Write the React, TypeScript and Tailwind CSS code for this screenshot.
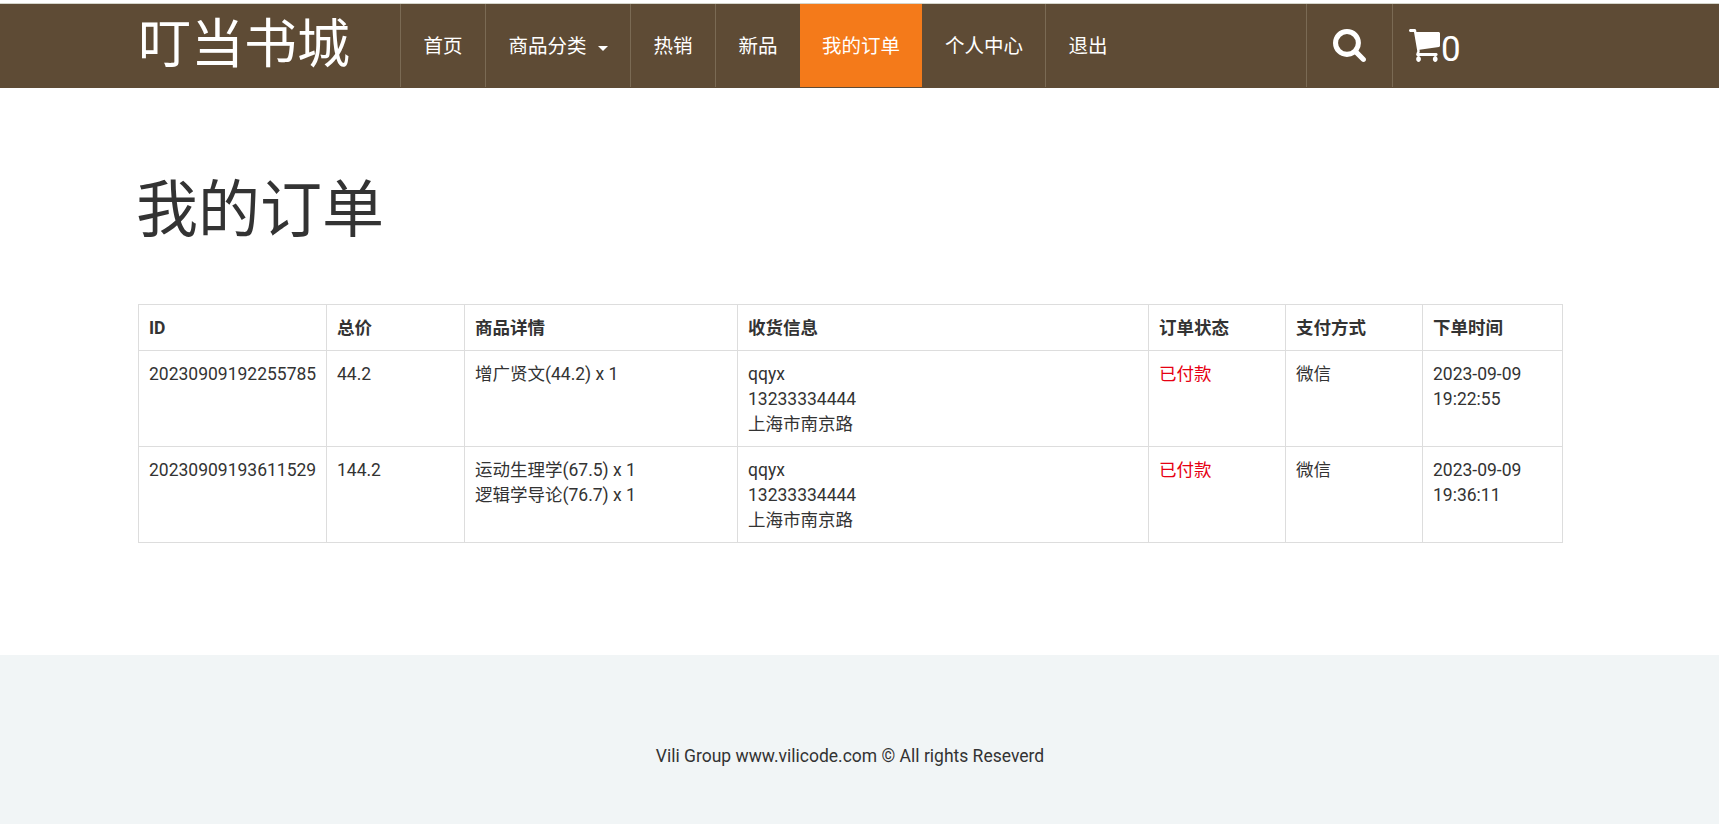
import React from "react";

const cjk = "font-['Roboto','Noto_Sans_CJK_SC',sans-serif]";

const navItems = ["首页", "商品分类", "热销", "新品", "我的订单", "个人中心", "退出"];

const orders = [
  {
    id: "20230909192255785",
    total: "44.2",
    items: ["增广贤文(44.2) x 1"],
    date: "2023-09-09",
    time: "19:22:55",
  },
  {
    id: "20230909193611529",
    total: "144.2",
    items: ["运动生理学(67.5) x 1", "逻辑学导论(76.7) x 1"],
    date: "2023-09-09",
    time: "19:36:11",
  },
];

const headers = ["ID", "总价", "商品详情", "收货信息", "订单状态", "支付方式", "下单时间"];

const SearchIcon = () => (
  <svg viewBox="0 0 1664 1664" className="w-[33px] h-[33px]" fill="currentColor">
    <path d="M1152 704q0-185-131.500-316.500t-316.500-131.500-316.500 131.500-131.500 316.500 131.500 316.500 316.500 131.500 316.500-131.500 131.500-316.500zm512 832q0 52-38 90t-90 38q-54 0-90-38l-343-342q-179 124-399 124-143 0-273.500-55.500t-225-150-150-225-55.500-273.500 55.500-273.500 150-225 225-150 273.500-55.500 273.500 55.500 225 150 150 225 55.500 273.500q0 220-124 399l343 343q37 37 37 90z" />
  </svg>
);

const CartIcon = () => (
  <svg viewBox="64 256 1664 1408" className="w-[31px] h-[33px]" preserveAspectRatio="none" fill="currentColor">
    <path d="M704 1536q0 52-38 90t-90 38-90-38-38-90 38-90 90-38 90 38 38 90zm896 0q0 52-38 90t-90 38-90-38-38-90 38-90 90-38 90 38 38 90zm128-1088v512q0 24-16.500 42.500t-40.500 21.500l-1044 122q13 60 13 70 0 16-24 64h920q26 0 45 19t19 45-19 45-45 19h-1024q-26 0-45-19t-19-45q0-11 8-31.500t16-36 21.500-40 15.500-29.500l-177-823h-204q-26 0-45-19t-19-45 19-45 45-19h256q16 0 28.500 6.500t19.500 15.500 13 24.500 8 26 5.500 29.500 4.500 26h1201q26 0 45 19t19 45z" />
  </svg>
);

const App = () => {
  return (
    <div className={`${cjk} min-h-[824px] pt-[3px] flex flex-col bg-white text-[17.5px] leading-[25px] text-[#333]`}>
      {/* navbar */}
      <div className="border-t border-t-[#d5d5ca] border-b border-b-[#5e4b35] bg-[#5e4b35] text-white flex h-[85px] pl-[138px]">
        <div className="w-[262px] text-[53px] leading-[72px] font-['Noto_Sans_CJK_SC',sans-serif]">叮当书城</div>
        <div className="flex flex-1">
          {navItems.map((item, i) => (
            <div
              key={item}
              className={
                i === 4
                  ? "flex items-center px-[22px] pt-[2px] text-[19.5px] bg-[#f47a1a]"
                  : i === 5
                    ? "flex items-center px-[22px] pt-[2px] text-[19.5px] border-l border-l-transparent"
                    : "flex items-center px-[22.5px] pt-[2px] text-[19.5px] border-l border-l-[#7a6a54]"
              }
            >
              {item}
              {i === 1 && <span className="ml-[11px] mt-[3px] border-x-[5px] border-x-transparent border-t-[5px] border-t-white" />}
            </div>
          ))}
        </div>
        <div className="flex w-[86px] items-center justify-center border-l border-l-[#7a6a54]">
          <SearchIcon />
        </div>
        <div className="flex w-[327px] items-center pl-[16px] border-l border-l-[#7a6a54]">
          <CartIcon />
          <span className="ml-[1px] mt-[8px] text-[35px] leading-[40px]">0</span>
        </div>
      </div>

      {/* content */}
      <div className="flex-1 pl-[138px]">
        <h1 className="-ml-[2px] mt-[75px] mb-[57px] text-[62px] leading-[84px] font-['Noto_Sans_CJK_SC',sans-serif]">我的订单</h1>
        <table className="w-[1424px] table-fixed border-collapse border border-[#ddd]">
          <thead>
            <tr>
              {headers.map((h, i) => (
                <th key={h} className={`${["w-[188px]", "w-[138px]", "w-[273px]", "w-[411px]", "w-[137px]", "w-[137px]", "w-[140px]"][i]} border border-[#ddd] px-[10px] pt-[11px] pb-[9px] text-left font-bold`}>
                  {h}
                </th>
              ))}
            </tr>
          </thead>
          <tbody>
            {orders.map((o) => (
              <tr key={o.id} className="align-top">
                <td className="border border-[#ddd] px-[10px] pt-[11px] pb-[9px]">{o.id}</td>
                <td className="border border-[#ddd] px-[10px] pt-[11px] pb-[9px]">{o.total}</td>
                <td className="border border-[#ddd] px-[10px] pt-[11px] pb-[9px]">
                  {o.items.map((it) => (
                    <div key={it}>{it}</div>
                  ))}
                </td>
                <td className="border border-[#ddd] px-[10px] pt-[11px] pb-[9px]">
                  <div>qqyx</div>
                  <div>13233334444</div>
                  <div>上海市南京路</div>
                </td>
                <td className="border border-[#ddd] px-[10px] pt-[11px] pb-[9px] text-[#e60012]">已付款</td>
                <td className="border border-[#ddd] px-[10px] pt-[11px] pb-[9px]">微信</td>
                <td className="border border-[#ddd] px-[10px] pt-[11px] pb-[9px]">
                  <div>{o.date}</div>
                  <div>{o.time}</div>
                </td>
              </tr>
            ))}
          </tbody>
        </table>
      </div>

      {/* footer */}
      <div className="h-[169px] bg-[#f1f5f6] flex items-center justify-center pr-[19px] pt-[33px]">
        Vili Group www.vilicode.com © All rights Reseverd
      </div>
    </div>
  );
};

export default App;
